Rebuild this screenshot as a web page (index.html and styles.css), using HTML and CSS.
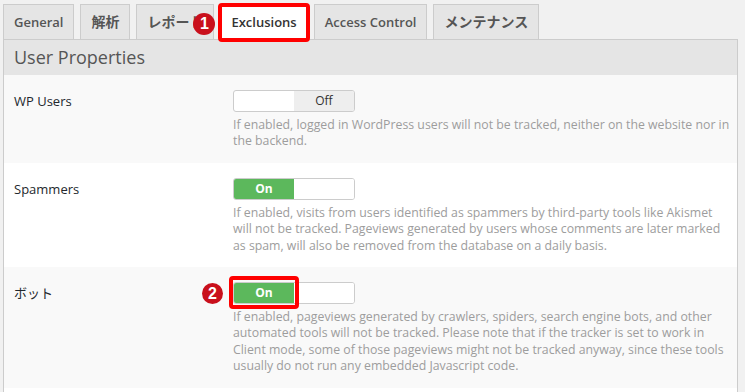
FILE: index.html
```html
<!DOCTYPE html>
<html lang="ja">
<head>
    <meta charset="UTF-8">
    <meta name="viewport" content="width=device-width, initial-scale=1.0">
    <title>Exclusions</title>
    <link rel="stylesheet" href="styles.css">
</head>
<body>
    <div class="wrap">
        <nav class="tabs">
            <a class="tab" href="javascript:;">General</a>
            <a class="tab tab-ja" href="javascript:;">解析</a>
            <a class="tab tab-ja" href="javascript:;">レポート<span class="badge badge-tab">1</span></a>
            <a class="tab tab-active" href="javascript:;">Exclusions</a>
            <a class="tab" href="javascript:;">Access Control</a>
            <a class="tab tab-ja" href="javascript:;">メンテナンス</a>
        </nav>
        <div class="panel">
            <h2 class="panel-title">User Properties</h2>

            <div class="row row-alt">
                <div class="label">WP Users</div>
                <div class="field">
                    <div class="toggle">
                        <span class="toggle-on"></span>
                        <span class="toggle-off">Off</span>
                    </div>
                    <p class="desc">If enabled, logged in WordPress users will not be tracked, neither on the website nor in<br>the backend.</p>
                </div>
            </div>

            <div class="row">
                <div class="label">Spammers</div>
                <div class="field">
                    <div class="toggle is-on">
                        <span class="toggle-on">On</span>
                        <span class="toggle-off"></span>
                    </div>
                    <p class="desc">If enabled, visits from users identified as spammers by third-party tools like Akismet<br>will not be tracked. Pageviews generated by users whose comments are later marked<br>as spam, will also be removed from the database on a daily basis.</p>
                </div>
            </div>

            <div class="row row-alt">
                <div class="label">ボット</div>
                <div class="field">
                    <div class="toggle is-on">
                        <span class="toggle-on mark">On</span>
                        <span class="toggle-off"></span>
                        <span class="badge badge-toggle">2</span>
                    </div>
                    <p class="desc">If enabled, pageviews generated by crawlers, spiders, search engine bots, and other<br>automated tools will not be tracked. Please note that if the tracker is set to work in<br>Client mode, some of those pageviews might not be tracked anyway, since these tools<br>usually do not run any embedded Javascript code.</p>
                </div>
            </div>

            <div class="row row-empty"></div>
        </div>
    </div>
</body>
</html>
```

FILE: styles.css
```css
*{
    margin: 0;
    padding: 0;
    box-sizing: border-box;
}
body{
    background-color: #f1f1f1;
    font-family: "Open Sans", "Noto Sans CJK JP", sans-serif;
    color: #23282d;
}
.wrap{
    padding: 4px 7px 0 3px;
}

/* タブ */
.tabs{
    display: flex;
    gap: 6px;
}
.tab{
    position: relative;
    display: block;
    padding: 5px 10px;
    border: 1px solid #ccc;
    border-bottom: none;
    background-color: #e5e5e5;
    color: #555;
    font-size: 13px;
    font-weight: 600;
    line-height: 24px;
    text-decoration: none;
    white-space: nowrap;
}
/* 日本語のタブは少し大きめ */
.tab-ja{
    font-size: 14px;
}
.tab-active{
    background-color: #fff;
    color: #333;
}
/* 赤い枠 */
.tab-active::after,
.mark::after{
    content: "";
    position: absolute;
    border: 4px solid #f00;
    border-radius: 4px;
}
.tab-active::after{
    left: -3px;
    right: -3px;
    top: -2px;
    bottom: -3px;
}

/* 番号バッジ */
.badge{
    position: absolute;
    width: 22px;
    height: 22px;
    border-radius: 50%;
    background-color: #c9101c;
    color: #fff;
    font-family: "Liberation Sans", sans-serif;
    font-weight: 700;
    font-size: 16px;
    line-height: 22px;
    text-align: center;
}
.badge-tab{
    left: 56px;
    top: 8px;
}
.badge-toggle{
    left: -32px;
    top: 0;
    width: 21px;
    height: 21px;
    line-height: 21px;
}

/* パネル */
.panel{
    border: 1px solid #ccc;
    background-color: #fff;
}
.panel-title{
    background-color: #e5e5e5;
    padding: 0 10px;
    font-size: 18px;
    font-weight: 400;
    line-height: 35px;
    color: #555;
}
.row{
    display: flex;
    padding: 15px 10px 13px;
}
.row-alt{
    background-color: #f9f9f9;
}
.row-empty{
    height: 20px;
}
.label{
    width: 219px;
    flex-shrink: 0;
    font-size: 13px;
    line-height: 22px;
}
.field{
    flex: 1;
}

/* トグル */
.toggle{
    position: relative;
    display: flex;
    width: 122px;
    height: 22px;
    border: 1px solid #ccc;
    border-radius: 3px;
    background-color: #fff;
    font-size: 12px;
    line-height: 20px;
    text-align: center;
}
.toggle span{
    display: block;
}
.toggle-on,
.toggle-off{
    width: 60px;
}
.toggle-off{
    background-color: #eee;
    color: #333;
    border-radius: 0 2px 2px 0;
}
.is-on .toggle-off{
    background-color: #fff;
}
.is-on .toggle-on{
    position: relative;
    background-color: #5cb85c;
    color: #fff;
    font-weight: 700;
    border-radius: 2px 0 0 2px;
}
.mark::after{
    left: -5px;
    right: -5px;
    top: -7px;
    bottom: -6px;
}

.desc{
    margin-top: 5px;
    font-size: 12.3px;
    line-height: 16.4px;
    color: #9d9d9d;
    white-space: nowrap;
}
```
